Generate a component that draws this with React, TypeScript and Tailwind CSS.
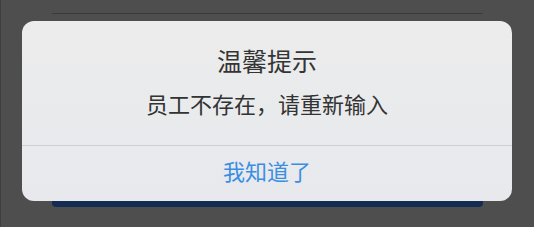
export default function App() {
  return (
    <div
      className="relative h-[227px] w-[534px] overflow-hidden border-l border-[#3f3f3f] bg-[#4e4e4e]"
      style={{ fontFamily: '"Noto Sans CJK SC", "Noto Sans", sans-serif' }}
    >
      <div className="pt-[13px]">
        <div className="mx-[51px] h-px bg-[#3b3b3b]" />
        <div className="mx-[51px] mt-[137px] h-[56px] rounded-b-[4px] bg-[#142c52]" />
      </div>
      <div className="absolute left-[21px] top-[21px] flex h-[180px] w-[490px] flex-col overflow-hidden rounded-[12px] bg-gradient-to-b from-[#ececec] to-[#e7e9ed]">
        <div className="flex flex-col items-center pt-[23px]">
          <div className="text-[25px] leading-[32px] text-[#343434]">温馨提示</div>
          <div className="mt-[12px] text-[22px] leading-[30px] text-[#333333]">员工不存在，请重新输入</div>
        </div>
        <div className="mt-[27px] h-px bg-[#cfcfcf]" />
        <div className="flex flex-1 items-center justify-center pb-[7px] text-[22px] leading-[30px] text-[#3a8ee2]">
          我知道了
        </div>
      </div>
    </div>
  );
}
